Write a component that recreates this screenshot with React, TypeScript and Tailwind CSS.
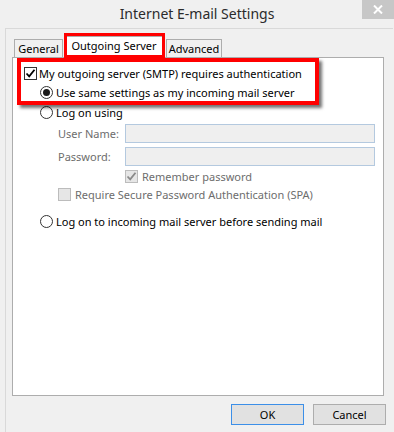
import React from "react";

const font = { fontFamily: '"Noto Sans", "Open Sans", sans-serif' };

function CheckBox({ checked, disabled }: { checked?: boolean; disabled?: boolean }) {
  return (
    <div
      className={
        "w-[13px] h-[13px] border flex items-center justify-center shrink-0 " +
        (disabled ? "border-[#bcbcbc] bg-[#e6e6e6]" : "border-[#333333] bg-white")
      }
    >
      {checked && (
        <svg width="11" height="11" viewBox="0 0 11 11">
          <path
            d="M1.5 5.5 L4.2 8.3 L9.5 1.8"
            fill="none"
            stroke={disabled ? "#8a8a8a" : "#000"}
            strokeWidth="1.8"
          />
        </svg>
      )}
    </div>
  );
}

function Radio({ checked }: { checked?: boolean }) {
  return (
    <div className="w-[13px] h-[13px] rounded-full border border-[#333333] bg-white flex items-center justify-center shrink-0">
      {checked && <div className="w-[7px] h-[7px] rounded-full bg-[#1a1a1a]" />}
    </div>
  );
}

export default function App() {
  return (
    <div
      className="w-[394px] h-[432px] bg-[#f0f0f0] relative overflow-hidden text-[11px] text-black flex flex-col"
      style={font}
    >
      {/* Title bar */}
      <div className="h-[28px] flex items-center justify-center shrink-0">
        <span className="text-[14px] text-[#2b2b2b] leading-none mt-[-1px]">Internet E-mail Settings</span>
      </div>
      <div className="absolute right-0 top-0 w-[32px] h-[19px] bg-[#c7c7c7] flex items-center justify-center">
        <svg width="10" height="9" viewBox="0 0 10 9">
          <path d="M1 0.5 L9 8.5 M9 0.5 L1 8.5" stroke="#fff" strokeWidth="2" />
        </svg>
      </div>

      {/* Body */}
      <div className="ml-[5px] mr-[1px] border-l border-t border-[#d9d9d9] flex-1 flex flex-col pl-[6px]">
        {/* Tabs */}
        <div className="flex items-end h-[28px] pl-[2px]">
          <div className="w-[49px] h-[18px] border border-b-0 border-[#adadad] bg-[#f0f0f0] flex items-center justify-center leading-none">
            General
          </div>
          <div className="w-[98px] h-[22px] border border-b-0 border-[#adadad] bg-white flex items-start justify-center pt-[3px] leading-none ml-[2px] mr-[3px] relative -mb-[1px] z-10">
            Outgoing Server
          </div>
          <div className="w-[56px] h-[18px] border border-b-0 border-[#adadad] bg-[#f0f0f0] flex items-center justify-center leading-none">
            Advanced
          </div>
        </div>
        {/* Panel */}
        <div className="w-[372px] h-[339px] bg-white border border-[#adadad] flex flex-col pl-[11px] pt-[9px]">
          <div className="flex items-center gap-[2px] h-[12px]">
            <CheckBox checked />
            <span className="leading-none">My outgoing server (SMTP) requires authentication</span>
          </div>
          <div className="ml-[16px] mt-[7px] flex flex-col">
            <div className="flex items-center gap-[3px] h-[12px]">
              <Radio checked />
              <span className="leading-none">Use same settings as my incoming mail server</span>
            </div>
            <div className="flex items-center gap-[3px] h-[12px] mt-[8px]">
              <Radio />
              <span className="leading-none">Log on using</span>
            </div>
            <div className="flex items-center mt-[6px] ml-[18px] text-[#6d6d6d]">
              <span className="w-[67px] leading-none">User Name:</span>
              <div className="w-[250px] h-[19px] border border-[#b4c9df] bg-[#efefef]" />
            </div>
            <div className="flex items-center mt-[4px] ml-[18px] text-[#6d6d6d]">
              <span className="w-[67px] leading-none">Password:</span>
              <div className="w-[250px] h-[19px] border border-[#b4c9df] bg-[#efefef]" />
            </div>
            <div className="flex items-center gap-[4px] mt-[4px] ml-[85px] text-[#6d6d6d] h-[12px]">
              <CheckBox checked disabled />
              <span className="leading-none">Remember password</span>
            </div>
            <div className="flex items-center gap-[4px] mt-[6px] ml-[18px] text-[#6d6d6d] h-[12px]">
              <CheckBox disabled />
              <span className="leading-none">Require Secure Password Authentication (SPA)</span>
            </div>
          </div>
          <div className="ml-[16px] mt-[15px] flex items-center gap-[3px] h-[12px]">
            <Radio />
            <span className="leading-none">Log on to incoming mail server before sending mail</span>
          </div>
        </div>
        {/* Buttons */}
        <div className="flex justify-end gap-[9px] mt-[8px] pr-[7px]">
          <button className="w-[73px] h-[21px] border border-[#3c8fe8] bg-[#e1e1e1] leading-none">OK</button>
          <button className="w-[73px] h-[21px] border border-[#adadad] bg-[#e1e1e1] leading-none">Cancel</button>
        </div>
      </div>

      {/* Red annotation boxes */}
      <div className="absolute left-[64px] top-[33px] w-[101px] h-[25px] border-[3px] border-[#ff0000] z-20" />
      <div className="absolute left-[17px] top-[58px] w-[302px] h-[47px] border-[4px] border-[#ff0000] shadow-[3px_3px_3px_rgba(0,0,0,0.55)] z-20" />
    </div>
  );
}
